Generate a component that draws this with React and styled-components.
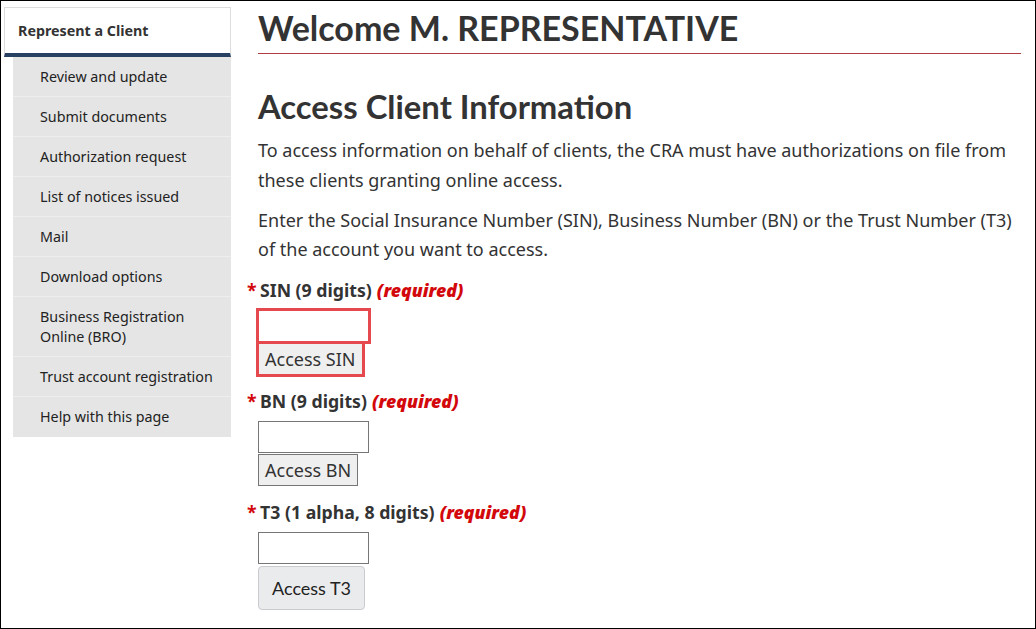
import React from "react"
import styled, { createGlobalStyle, css } from "styled-components"

const GlobalStyle = createGlobalStyle`
  * {
    box-sizing: border-box;
  }

  body {
    margin: 0;
    background: #fff;
    font-family: "Noto Sans", "DejaVu Sans", sans-serif;
    color: #333;
  }
`

const Frame = styled.div`
  width: 1036px;
  height: 629px;
  border: 1px solid #000;
  display: flex;
  align-items: flex-start;
  gap: 27px;
  padding: 6px 14px 0 3px;
  overflow: hidden;
`

const Sidebar = styled.nav`
  width: 227px;
  flex: none;
  display: flex;
  flex-direction: column;
`

const SideHeader = styled.div`
  border: 1px solid #ddd;
  border-bottom: 4px solid #284162;
  background: #fff;
  padding: 12px 13px 11px;
  font-size: 14.3px;
  font-weight: 700;
  line-height: 22px;
  color: #333;
`

const SideList = styled.ul`
  list-style: none;
  margin: 0 0 0 9px;
  padding: 0;
  background: #e5e5e5;
`

const SideItem = styled.li`
  padding: 10px 10px 9px 27px;
  font-size: 14.3px;
  line-height: 20px;
  color: #222;
  border-bottom: 1px solid ${({ last }) => (last ? "#e5e5e5" : "#eeeeee")};
`

const Main = styled.main`
  flex: 1;
  display: flex;
  flex-direction: column;
`

const Title = styled.h1`
  margin: 0;
  padding: 1px 0 4px;
  font-family: Lato, "Noto Sans", sans-serif;
  font-size: 34px;
  font-weight: 700;
  line-height: 1.2;
  color: #333;
  border-bottom: 1px solid #af3c43;
`

const Subtitle = styled.h2`
  margin: 33px 0 10px;
  font-family: Lato, "Noto Sans", sans-serif;
  font-size: 32.8px;
  font-weight: 700;
  line-height: 1.2;
  color: #333;
`

const Para = styled.p`
  margin: 0 0 10px;
  font-size: 18px;
  line-height: 1.65;
  color: #333;
`

const Field = styled.div`
  display: flex;
  flex-direction: column;
  align-items: flex-start;
  margin-top: ${({ first }) => (first ? "3px" : "14px")};
`

const Label = styled.label`
  position: relative;
  font-size: 17.7px;
  font-weight: 700;
  line-height: 24px;
  color: #333;
  margin: 0 0 8px 2px;
`

const Star = styled.span`
  position: absolute;
  left: -13px;
  top: 0;
  color: #d3080c;
`

const Required = styled.strong`
  color: #d3080c;
  font-style: italic;
  margin-left: 5px;
`

const flagged = css`
  outline: 3px solid #e5484d;
  outline-offset: -1px;
`

const TextInput = styled.input`
  width: 111px;
  height: 32px;
  border: 1px solid #767676;
  background: #fff;
  font: inherit;
  ${({ $flag }) => $flag && flagged}
`

const PlainButton = styled.button`
  height: 32px;
  padding: 0 6px;
  margin-top: 1px;
  border: 1px solid #767676;
  border-radius: 0;
  background: #efefef;
  font-family: "Noto Sans", sans-serif;
  font-size: 18px;
  color: #333;
  ${({ $flag }) => $flag && flagged}
`

const RoundButton = styled.button`
  height: 44px;
  margin-top: 2px;
  padding: 0 13px;
  border: 1px solid #c9cbcf;
  border-radius: 4px;
  background: #eaebed;
  font-family: Lato, sans-serif;
  font-size: 18px;
  color: #222;
`

const menu = [
  "Review and update",
  "Submit documents",
  "Authorization request",
  "List of notices issued",
  "Mail",
  "Download options",
  "Business Registration Online (BRO)",
  "Trust account registration",
  "Help with this page",
]

function App() {
  return (
    <>
      <GlobalStyle />
      <Frame>
        <Sidebar>
          <SideHeader>Represent a Client</SideHeader>
          <SideList>
            {menu.map((item, i) => (
              <SideItem key={item} last={i === menu.length - 1}>
                {item === "Business Registration Online (BRO)" ? (
                  <>
                    Business Registration
                    <br />
                    Online (BRO)
                  </>
                ) : (
                  item
                )}
              </SideItem>
            ))}
          </SideList>
        </Sidebar>

        <Main>
          <Title>Welcome M. REPRESENTATIVE</Title>
          <Subtitle>Access Client Information</Subtitle>
          <Para>
            To access information on behalf of clients, the CRA must have
            authorizations on file from these clients granting online access.
          </Para>
          <Para>
            Enter the Social Insurance Number (SIN), Business Number (BN) or the
            Trust Number (T3) of the account you want to access.
          </Para>

          <Field first>
            <Label htmlFor="sin">
              <Star>*</Star>SIN (9 digits)<Required>(required)</Required>
            </Label>
            <TextInput id="sin" $flag />
            <PlainButton $flag>Access SIN</PlainButton>
          </Field>

          <Field>
            <Label htmlFor="bn">
              <Star>*</Star>BN (9 digits)<Required>(required)</Required>
            </Label>
            <TextInput id="bn" />
            <PlainButton>Access BN</PlainButton>
          </Field>

          <Field>
            <Label htmlFor="t3">
              <Star>*</Star>T3 (1 alpha, 8 digits)<Required>(required)</Required>
            </Label>
            <TextInput id="t3" />
            <RoundButton>Access T3</RoundButton>
          </Field>
        </Main>
      </Frame>
    </>
  )
}

export default App
